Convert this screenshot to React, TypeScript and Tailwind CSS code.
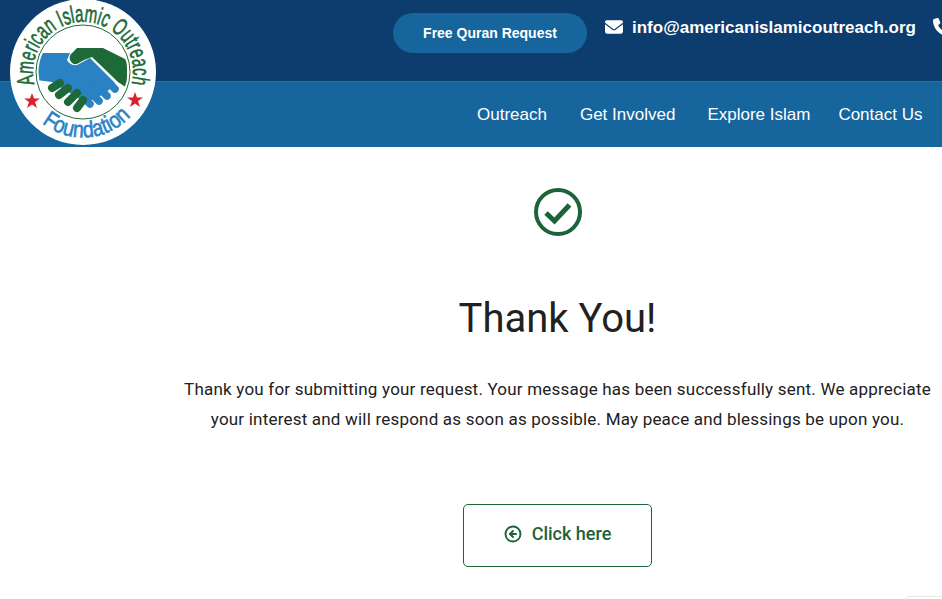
import { ArrowLeftCircle } from 'lucide-react'

function Logo() {
  return (
    <svg viewBox="0 0 148 148" className="absolute left-[9px] top-[-2px] w-[148px] h-[148px]">
      <defs>
        <path id="topArc" d="M 25.500 86.100 A 50 50 0 1 1 122.500 86.100" />
        <path id="bottomArc" d="M 33 125 A 65 65 0 0 0 123 117" />
        <clipPath id="inner">
          <circle cx="74" cy="74" r="44.500" />
        </clipPath>
      </defs>
      <circle cx="74" cy="74" r="73" fill="#ffffff" />
      <circle cx="74" cy="74" r="47" fill="none" stroke="#1d6a38" strokeWidth="1" />
      <g clipPath="url(#inner)">
        <path
          d="M28 55 H61 L58 62 Q61 68 68 67 L81 60 L106 85 L100 92 L88 100 L78 104 L69 100 L43 84 L28 82 Z"
          fill="#2a82c5"
        />
        <g stroke="#2a82c5" strokeWidth="7.500" strokeLinecap="round">
          <path d="M92 77 L106 91" />
          <path d="M86 86 L98 98" />
          <path d="M79 92 L90 103" />
          <path d="M73 98 L81 106" />
        </g>
        <path
          d="M61 62 Q60 58 62 56 L68 50 H94 L118 62 V90 L109 84 L83 59 Q76 61 68 66 Q63 67 61 62 Z"
          fill="#1d6a38"
        />
        <g stroke="#1d6a38" strokeWidth="8" strokeLinecap="round">
          <path d="M43 90 L51 85" />
          <path d="M50 97 L59 90" />
          <path d="M59 104 L68 95" />
          <path d="M68 110 L74 102" />
        </g>
      </g>
      <text fontFamily="'Liberation Sans', sans-serif" fontSize="24" fill="#1d6a38" stroke="#1d6a38" strokeWidth="0.600">
        <textPath href="#topArc" textLength="181" lengthAdjust="spacingAndGlyphs">
          American Islamic Outreach
        </textPath>
      </text>
      <text fontFamily="'Liberation Sans', sans-serif" fontSize="23" fill="#2a82c5" stroke="#2a82c5" strokeWidth="0.600">
        <textPath href="#bottomArc" textLength="98" lengthAdjust="spacingAndGlyphs">
          Foundation
        </textPath>
      </text>
      <path d="M23 95 l2 5.500 h6 l-5 3.500 l2 6 l-5 -3.500 l-5 3.500 l2 -6 l-5 -3.500 h6 Z" fill="#d8202f" />
      <path d="M126 94 l2 5.500 h6 l-5 3.500 l2 6 l-5 -3.500 l-5 3.500 l2 -6 l-5 -3.500 h6 Z" fill="#d8202f" />
    </svg>
  )
}

function Header() {
  return (
    <header className="relative font-['Liberation_Sans',sans-serif] text-white">
      <div className="h-[81px] bg-[#0c3d6e] pl-[393px] flex items-start">
        <a className="mt-[13px] w-[194px] h-[40px] rounded-[20px] bg-[#17659d] flex items-center justify-center text-[14px] font-bold">
          Free Quran Request
        </a>
        <div className="ml-[18px] mt-[17px] flex items-center h-[20px]">
          <svg viewBox="0 0 512 512" className="w-[18px] h-[18px] fill-white">
            <path d="M48 64C21.500 64 0 85.500 0 112c0 15.100 7.100 29.300 19.200 38.400L236.800 313.600c11.400 8.500 27 8.500 38.400 0L492.800 150.400c12.100-9.100 19.200-23.300 19.200-38.400 0-26.500-21.500-48-48-48H48zM0 176V384c0 35.300 28.700 64 64 64H448c35.300 0 64-28.700 64-64V176L294.400 339.200c-22.800 17.100-54 17.100-76.800 0L0 176z" />
          </svg>
          <span className="ml-[9px] text-[17px] font-bold leading-none">info@americanislamicoutreach.org</span>
          <svg viewBox="0 0 512 512" className="ml-[17px] w-[18px] h-[18px] fill-white">
            <path d="M164.900 24.600c-7.700-18.600-28-28.500-47.400-23.200l-88 24C12.100 30.200 0 46 0 64C0 311.400 200.600 512 448 512c18 0 33.800-12.100 38.600-29.500l24-88c5.300-19.400-4.600-39.700-23.200-47.400l-96-40c-16.300-6.800-35.200-2.100-46.300 11.600L304.700 368C234.300 334.700 177.300 277.700 144 207.300L193.300 167c13.700-11.200 18.400-30 11.600-46.300l-40-96z" />
          </svg>
        </div>
      </div>
      <nav className="h-[66px] bg-[#17659d] border-t border-[#2a6f9f] pl-[477px] flex items-center gap-[33px] text-[17px]">
        <a>Outreach</a>
        <a>Get Involved</a>
        <a className="-ml-[1px] -mr-[5px]">Explore Islam</a>
        <a>Contact Us</a>
      </nav>
      <Logo />
    </header>
  )
}

export default function App() {
  return (
    <div className="relative w-[942px] h-[599px] overflow-hidden bg-white">
      <div className="w-[1115px] font-['Roboto',sans-serif]">
        <Header />
        <main className="flex flex-col items-center">
          <svg viewBox="0 0 48 48" className="mt-[41px] w-[48px] h-[48px] fill-none stroke-[#1d6339]">
            <circle cx="24" cy="24" r="22" strokeWidth="4" />
            <path d="M12 25 L20.500 33 L35.500 17" strokeWidth="5" />
          </svg>
          <h1 className="mt-[53px] text-[40px] leading-[60px] text-[#212121]">Thank You!</h1>
          <p className="mt-[25px] w-[760px] text-center text-[17px] leading-[30px] tracking-[0.2px] text-[#212121]">
            Thank you for submitting your request. Your message has been successfully sent. We appreciate your interest and will respond as soon as possible. May peace and blessings be upon you.
          </p>
          <a className="mt-[70px] w-[189px] h-[63px] rounded-[5px] border border-[#1d6339] flex items-center justify-center gap-[10px] pb-[3px] text-[18px] font-medium text-[#1d6339]">
            <ArrowLeftCircle className="w-[18px] h-[18px]" strokeWidth={2.500} />
            <span className="-mt-[2px]">Click here</span>
          </a>
        </main>
      </div>
      <div className="absolute left-[905px] top-[596px] w-[60px] h-[20px] rounded-t-[4px] border border-[#e5e5e5]" />
    </div>
  )
}
